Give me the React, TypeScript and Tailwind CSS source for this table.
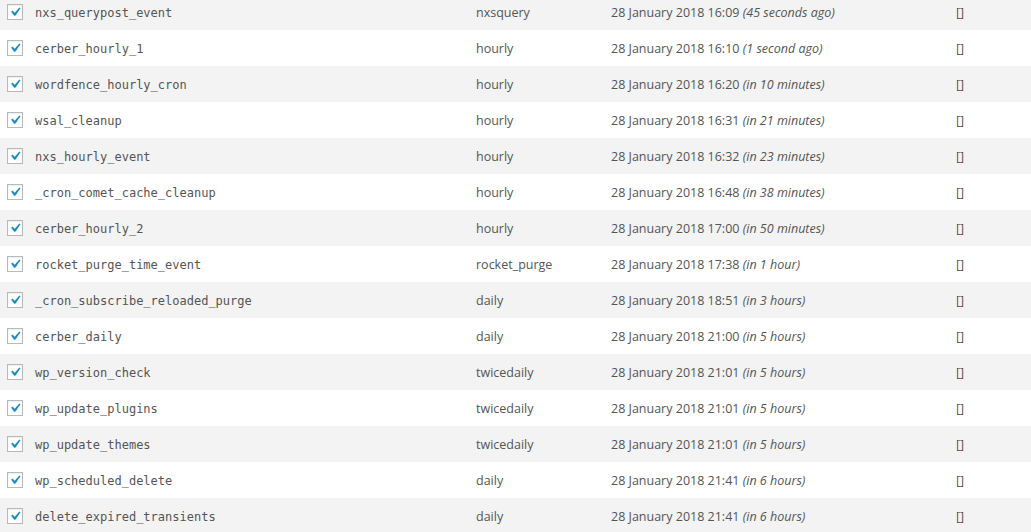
const rows = [
  ["nxs_querypost_event", "nxsquery", "28 January 2018 16:09", "45 seconds ago"],
  ["cerber_hourly_1", "hourly", "28 January 2018 16:10", "1 second ago"],
  ["wordfence_hourly_cron", "hourly", "28 January 2018 16:20", "in 10 minutes"],
  ["wsal_cleanup", "hourly", "28 January 2018 16:31", "in 21 minutes"],
  ["nxs_hourly_event", "hourly", "28 January 2018 16:32", "in 23 minutes"],
  ["_cron_comet_cache_cleanup", "hourly", "28 January 2018 16:48", "in 38 minutes"],
  ["cerber_hourly_2", "hourly", "28 January 2018 17:00", "in 50 minutes"],
  ["rocket_purge_time_event", "rocket_purge", "28 January 2018 17:38", "in 1 hour"],
  ["_cron_subscribe_reloaded_purge", "daily", "28 January 2018 18:51", "in 3 hours"],
  ["cerber_daily", "daily", "28 January 2018 21:00", "in 5 hours"],
  ["wp_version_check", "twicedaily", "28 January 2018 21:01", "in 5 hours"],
  ["wp_update_plugins", "twicedaily", "28 January 2018 21:01", "in 5 hours"],
  ["wp_update_themes", "twicedaily", "28 January 2018 21:01", "in 5 hours"],
  ["wp_scheduled_delete", "daily", "28 January 2018 21:41", "in 6 hours"],
  ["delete_expired_transients", "daily", "28 January 2018 21:41", "in 6 hours"],
]

function Checkbox() {
  return (
    <span className="flex h-4 w-4 items-center justify-center border border-[#b4b9be] bg-white shadow-[inset_0_1px_2px_rgba(0,0,0,0.07)]">
      <svg viewBox="0 0 20 20" className="h-[18px] w-[18px] shrink-0">
        <path d="M14.83 4.89l1.34.94-5.81 8.38H9.02L5.78 9.67l1.34-1.25 2.57 2.4z" fill="#1e8cbe" />
      </svg>
    </span>
  )
}

export default function App() {
  return (
    <div className="h-[532px] w-[1031px] overflow-hidden bg-white font-['Open_Sans',sans-serif] text-[12.5px] text-[#555]">
      <div className="-mt-[6px]">
        {rows.map(([hook, recurrence, date, rel], i) => (
          <div key={hook} className={`flex h-9 items-center ${i % 2 === 0 ? "bg-[#f3f3f3]" : "bg-white"}`}>
            <div className="w-[35px] pl-[7px]">
              <Checkbox />
            </div>
            <div className="w-[441px] pt-[2px] font-['DejaVu_Sans_Mono',monospace] text-[12px]">{hook}</div>
            <div className="w-[135px] pt-[2px]">{recurrence}</div>
            <div className="w-[345px] pt-[2px]">
              {date} <span className="italic">({rel})</span>
            </div>
            <div className="pt-[2px]">[]</div>
          </div>
        ))}
      </div>
    </div>
  )
}
